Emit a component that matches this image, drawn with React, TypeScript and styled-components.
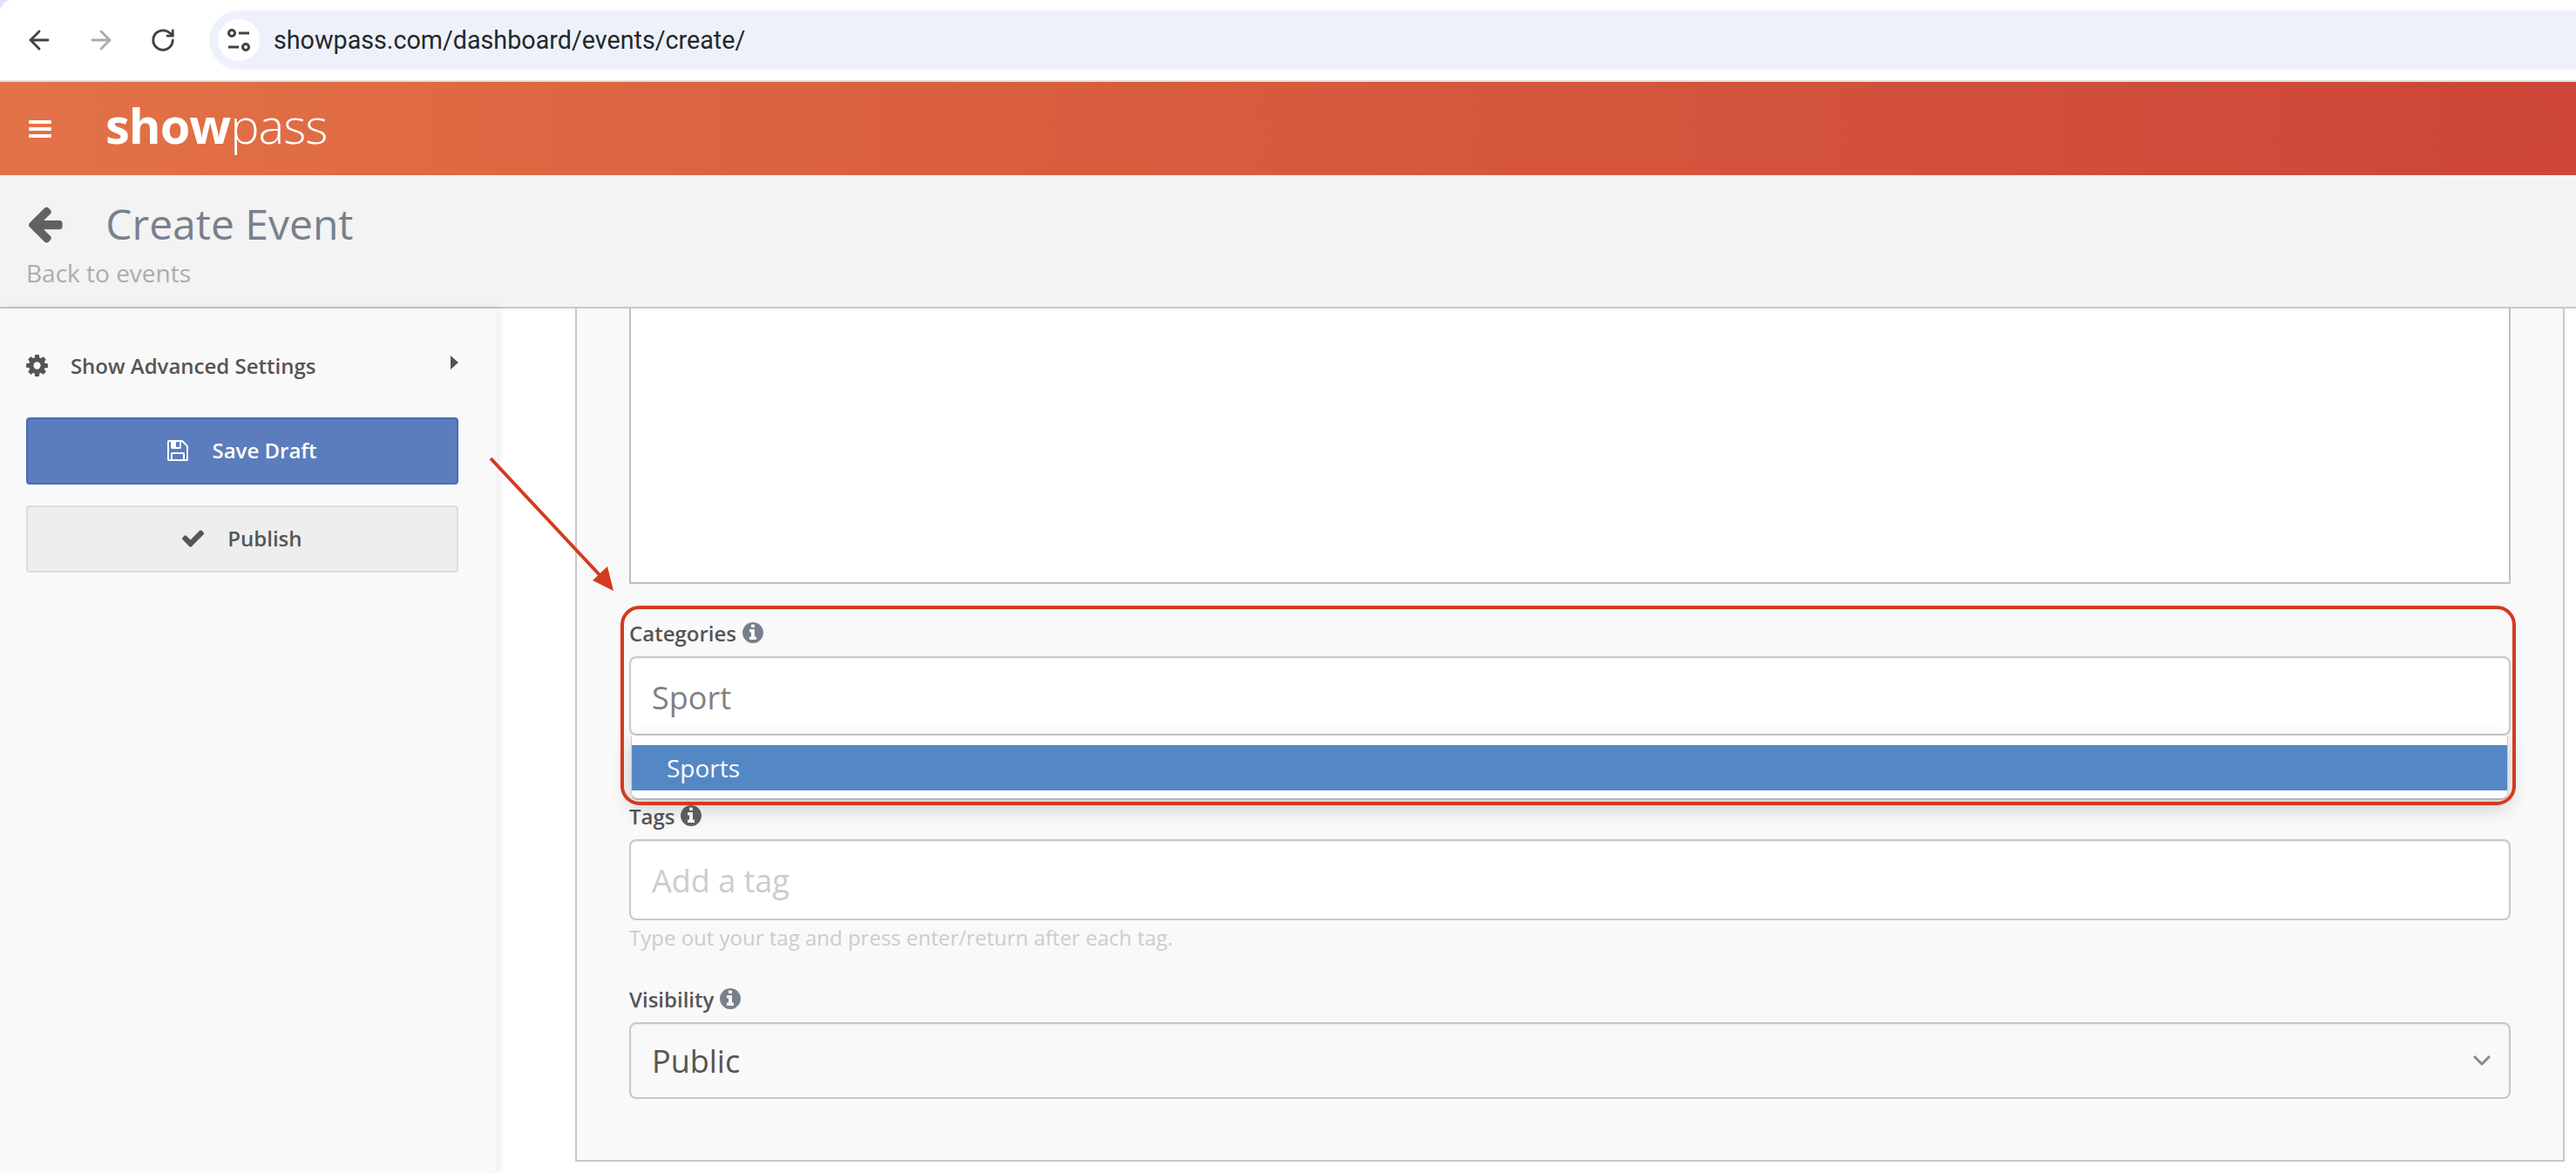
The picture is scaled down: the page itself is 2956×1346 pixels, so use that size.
import React from "react"
import styled, { createGlobalStyle } from "styled-components"
import { ArrowLeft, ArrowRight, RotateCw } from "lucide-react"

// font awesome 4 glyphs, on their 1792 grid
const GLYPHS = {
  back: "M1664 896v128q0 53-32.5 89.5t-84.5 36.5h-704l293 294q38 36 38 90t-38 90l-75 76q-37 37-90 37-52 0-91-37l-651-652q-37-37-37-90 0-52 37-91l651-650q38-38 91-38 52 0 90 38l75 74q38 38 38 91t-38 91l-293 293h704q52 0 84.5 36.5t32.5 89.5z",
  check: "M1671 566q0 40-28 68l-724 724-136 136q-28 28-68 28t-68-28l-136-136-362-362q-28-28-28-68t28-68l136-136q28-28 68-28t68 28l294 295 656-657q28-28 68-28t68 28l136 136q28 28 28 68z",
  info: "M1152 1376v-160q0-14-9-23t-23-9h-96v-512q0-14-9-23t-23-9h-320q-14 0-23 9t-9 23v160q0 14 9 23t23 9h96v320h-96q-14 0-23 9t-9 23v160q0 14 9 23t23 9h448q14 0 23-9t9-23zm-128-896v-160q0-14-9-23t-23-9h-192q-14 0-23 9t-9 23v160q0 14 9 23t23 9h192q14 0 23-9t9-23zm640 416q0 209-103 385.5t-279.5 279.5-385.5 103-385.5-103-279.5-279.5-103-385.5 103-385.5 279.5-279.5 385.5-103 385.5 103 279.5 279.5 103 385.5z",
  cog: "M1152 896q0-106-75-181t-181-75-181 75-75 181 75 181 181 75 181-75 75-181zm512-109v222q0 12-8 23t-20 13l-185 28q-19 54-39 91 35 50 107 138 10 12 10 25t-9 23q-27 37-99 108t-94 71q-12 0-26-9l-138-108q-44 23-91 38-16 136-29 186-7 28-36 28h-222q-14 0-24.5-8.5t-11.5-21.5l-28-184q-49-16-90-37l-141 107q-10 9-25 9-14 0-25-11-126-114-165-168-7-10-7-23 0-12 8-23 15-21 51-66.5t54-70.5q-27-50-41-99l-183-27q-13-2-21-12.5t-8-23.5v-222q0-12 8-23t19-13l186-28q14-46 39-92-40-57-107-138-10-12-10-24 0-10 9-23 26-36 98.5-107.5t94.5-71.5q13 0 26 10l138 107q44-23 91-38 16-136 29-186 7-28 36-28h222q14 0 24.5 8.5t11.5 21.5l28 184q49 16 90 37l142-107q9-9 24-9 13 0 25 10 129 119 165 170 7 8 7 22 0 12-8 23-15 21-51 66.5t-54 70.5q26 50 41 98l183 28q13 2 21 12.5t8 23.5z",
  save: "M512 1536h768v-384h-768v384zm896 0h128v-896q0-14-10-38.5t-20-34.5l-281-281q-10-10-34-20t-39-10v416q0 40-28 68t-68 28h-576q-40 0-68-28t-28-68v-416h-128v1280h128v-416q0-40 28-68t68-28h832q40 0 68 28t28 68v416zm-384-928v-320q0-13-9.5-22.5t-22.5-9.5h-192q-13 0-22.5 9.5t-9.5 22.5v320q0 13 9.5 22.5t22.5 9.5h192q13 0 22.5-9.5t9.5-22.5zm640 32v928q0 40-28 68t-68 28h-1344q-40 0-68-28t-28-68v-1344q0-40 28-68t68-28h928q40 0 88 20t76 48l280 280q28 28 48 76t20 88z",
}

const Global = createGlobalStyle`
  html, body { margin: 0; padding: 0; background: #fff; }
  * { box-sizing: border-box; }
  body { font-family: "Open Sans", "Liberation Sans", sans-serif; }
`

const Page = styled.div`
  position: relative;
  width: 2956px;
  height: 1346px;
  display: flex;
  flex-direction: column;
  overflow: hidden;
  background: #dde6f8;
`

const GlyphSvg = styled.svg<{ $size: number }>`
  flex: none;
  width: ${props => props.$size}px;
  height: ${props => props.$size}px;
  margin: ${props => -props.$size * 0.0714}px;
  fill: currentColor;
`

function Glyph({ name, size }: { name: keyof typeof GLYPHS; size: number }) {
  return (
    <GlyphSvg $size={size} viewBox="0 0 1792 1792">
      <path d={GLYPHS[name]} />
    </GlyphSvg>
  )
}

const BrowserBar = styled.div`
  height: 94px;
  flex: none;
  display: flex;
  align-items: flex-start;
  padding: 12px 0 0 28px;
  background: #fff;
  border-bottom: 2px solid #e0e2dc;
  border-top-left-radius: 14px;
`

const NavButton = styled.div<{ $dim?: boolean }>`
  width: 34px;
  height: 68px;
  margin-right: 37px;
  display: flex;
  align-items: center;
  justify-content: center;
  color: ${props => (props.$dim ? "#a9abad" : "#3f4144")};
`

const UrlPill = styled.div`
  flex: 1;
  height: 68px;
  margin-left: -1px;
  padding-left: 10px;
  display: flex;
  align-items: center;
  background: #edf2fa;
  border-radius: 34px 0 0 34px;
`

const SiteIcon = styled.div`
  width: 48px;
  height: 48px;
  flex: none;
  display: flex;
  align-items: center;
  justify-content: center;
  background: #fff;
  border-radius: 50%;
`

const UrlText = styled.span`
  margin-left: 16px;
  font-family: "Roboto", "Liberation Sans", sans-serif;
  font-size: 28.7px;
  color: #25272a;
`

const Header = styled.div`
  height: 107px;
  flex: none;
  display: flex;
  align-items: center;
  padding-left: 33px;
  color: #fff;
  background: linear-gradient(92deg, #e37247 0%, #da603f 35%, #cd4639 100%);
`

const Logo = styled.div`
  margin: -10px 0 0 62px;
  font-size: 56px;
  line-height: 1;
  letter-spacing: -1px;
`

const LogoBold = styled.span`
  font-weight: 700;
`

const LogoLight = styled.span`
  font-weight: 300;
`

const TitleBar = styled.div`
  height: 153px;
  flex: none;
  padding: 28px 0 0 30px;
  background: #f3f3f3;
  border-bottom: 2px solid #c8c8c8;
`

const TitleRow = styled.div`
  height: 54px;
  display: flex;
  align-items: center;
  padding-left: 1px;
  color: #616161;
`

const Title = styled.h1`
  margin: 0 0 0 50px;
  font-size: 48px;
  font-weight: 400;
  color: #78808d;
`

const BackLink = styled.div`
  margin-top: 10px;
  font-size: 28px;
  line-height: 40px;
  color: #acacac;
`

const Body = styled.div`
  flex: 1;
  display: flex;
  min-height: 0;
  background: #fff;
`

const Sidebar = styled.aside`
  position: relative;
  z-index: 1;
  width: 570px;
  flex: none;
  padding: 45px 44px 0 30px;
  background: #f9f9f9;
  box-shadow: 2px 0 8px rgba(0, 0, 0, 0.1);
`

const SettingsRow = styled.div`
  height: 40px;
  display: flex;
  align-items: center;
  color: #555;
  font-size: 24px;
  font-weight: 600;
`

const SettingsLabel = styled.span`
  flex: 1;
  margin-left: 26px;
`

const Caret = styled.svg`
  flex: none;
  margin: -6px 0 0 0;
  fill: #555;
`

const ActionButton = styled.div<{ $primary?: boolean }>`
  height: 77px;
  margin-top: ${props => (props.$primary ? "40px" : "24px")};
  padding-bottom: 2px;
  display: flex;
  align-items: center;
  justify-content: center;
  gap: 27px;
  font-size: 24px;
  font-weight: 600;
  color: ${props => (props.$primary ? "#fff" : "#555")};
  background: ${props => (props.$primary ? "#5b7dbd" : "#eeeeee")};
  border: 2px solid ${props => (props.$primary ? "#4a6cb0" : "#dcdcdc")};
  border-radius: 4px;
`

const Main = styled.main`
  flex: 1;
  min-width: 0;
  padding: 0 13px 0 90px;
`

const Panel = styled.section`
  padding: 0 60px 70px 60px;
  background: #f9f9f9;
  border: 2px solid #c8c8c8;
  border-top: 0;
`

const TextArea = styled.div`
  height: 316px;
  background: #fff;
  border: 2px solid #c0c0c0;
  border-top: 0;
`

const Field = styled.div<{ $gap: number }>`
  position: relative;
  margin-top: ${props => props.$gap}px;
`

const Label = styled.label<{ $icon?: string }>`
  height: 30px;
  margin-bottom: 11px;
  padding-bottom: 2px;
  display: flex;
  align-items: center;
  gap: 7px;
  font-size: 24px;
  font-weight: 600;
  color: #555;

  svg {
    color: ${props => props.$icon || "#78808d"};
  }
`

const InputBox = styled.div<{ $height: number; $fill?: string; $text?: string; $drop?: number }>`
  position: relative;
  height: ${props => props.$height}px;
  display: flex;
  align-items: center;
  justify-content: space-between;
  padding: ${props => props.$drop || 0}px 20px 0 24px;
  font-size: 36px;
  color: ${props => props.$text || "#818181"};
  background: ${props => props.$fill || "#fff"};
  border: 2px solid #c8c8c8;
  border-radius: 8px;
  box-shadow: inset 0 1px 2px rgba(0, 0, 0, 0.07);
`

const Dropdown = styled.div`
  position: absolute;
  z-index: 2;
  top: calc(100% + 2px);
  left: 0;
  right: 1px;
  height: 74px;
  padding: 11px 0 0;
  background: #fff;
  border: 1px solid #cfcfcf;
  border-top: 0;
  border-bottom: 2px solid #b5b5b5;
  border-radius: 0 0 8px 8px;
  box-shadow: 0 8px 24px rgba(0, 0, 0, 0.2);
`

const Option = styled.div`
  height: 52px;
  display: flex;
  align-items: center;
  padding-left: 40px;
  font-size: 28px;
  color: #fff;
  background: #5488c5;
`

const Help = styled.div`
  height: 30px;
  margin-top: 4px;
  display: flex;
  align-items: center;
  font-size: 24px;
  color: #cccccc;
`

const Highlight = styled.div`
  position: absolute;
  z-index: 3;
  top: -17px;
  bottom: -80px;
  left: -10px;
  right: -6px;
  border: 4px solid #d43a1f;
  border-radius: 22px;
  pointer-events: none;
`

const Annotation = styled.svg`
  position: absolute;
  z-index: 4;
  top: 520px;
  left: 556px;
`

function TuneIcon() {
  return (
    <svg width="28" height="28" viewBox="0 0 28 28" fill="none" stroke="#3f4144" strokeWidth="3">
      <circle cx="6" cy="6" r="3.5" />
      <path d="M14 6h12" />
      <path d="M2 22h12" />
      <circle cx="22" cy="22" r="3.5" />
    </svg>
  )
}

function MenuIcon() {
  return (
    <svg width="26" height="20" viewBox="0 0 26 20" fill="#fff">
      <rect width="26" height="4" rx="1" />
      <rect y="8" width="26" height="4" rx="1" />
      <rect y="16" width="26" height="4" rx="1" />
    </svg>
  )
}

export default function App() {
  return (
    <Page>
      <Global />
      <BrowserBar>
        <NavButton><ArrowLeft size={34} strokeWidth={2} /></NavButton>
        <NavButton $dim><ArrowRight size={34} strokeWidth={2} /></NavButton>
        <NavButton><RotateCw size={30} strokeWidth={2.2} /></NavButton>
        <UrlPill>
          <SiteIcon><TuneIcon /></SiteIcon>
          <UrlText>showpass.com/dashboard/events/create/</UrlText>
        </UrlPill>
      </BrowserBar>
      <Header>
        <MenuIcon />
        <Logo>
          <LogoBold>show</LogoBold>
          <LogoLight>pass</LogoLight>
        </Logo>
      </Header>
      <TitleBar>
        <TitleRow>
          <Glyph name="back" size={47} />
          <Title>Create Event</Title>
        </TitleRow>
        <BackLink>Back to events</BackLink>
      </TitleBar>
      <Body>
        <Sidebar>
          <SettingsRow>
            <Glyph name="cog" size={29} />
            <SettingsLabel>Show Advanced Settings</SettingsLabel>
            <Caret width="10" height="16" viewBox="0 0 10 16"><path d="M1 0L10 8L1 16Z" /></Caret>
          </SettingsRow>
          <ActionButton $primary><Glyph name="save" size={28} />Save Draft</ActionButton>
          <ActionButton><Glyph name="check" size={29} />Publish</ActionButton>
        </Sidebar>
        <Main>
          <Panel>
            <TextArea />
            <Field $gap={42}>
              <Label>Categories <Glyph name="info" size={28} /></Label>
              <InputBox $height={91} $drop={4}>
                Sport
                <Dropdown><Option>Sports</Option></Dropdown>
              </InputBox>
              <Highlight />
            </Field>
            <Field $gap={78}>
              <Label $icon="#616161">Tags <Glyph name="info" size={28} /></Label>
              <InputBox $height={93} $text="#cccccc" $drop={2}>Add a tag</InputBox>
              <Help>Type out your tag and press enter/return after each tag.</Help>
            </Field>
            <Field $gap={42}>
              <Label>Visibility <Glyph name="info" size={28} /></Label>
              <InputBox $height={88} $fill="#f9f9f9" $text="#555555">
                Public
                <svg width="22" height="14" viewBox="0 0 22 14" fill="none" stroke="#8a8a8a" strokeWidth="3">
                  <path d="M2 2l9 9 9-9" />
                </svg>
              </InputBox>
            </Field>
          </Panel>
        </Main>
      </Body>
      <Annotation width="160" height="170" viewBox="0 0 160 170">
        <path d="M7 6L136 144" stroke="#d43a1f" strokeWidth="4" fill="none" />
        <path d="M148 158L124 146L141 130Z" fill="#d43a1f" />
      </Annotation>
    </Page>
  )
}
